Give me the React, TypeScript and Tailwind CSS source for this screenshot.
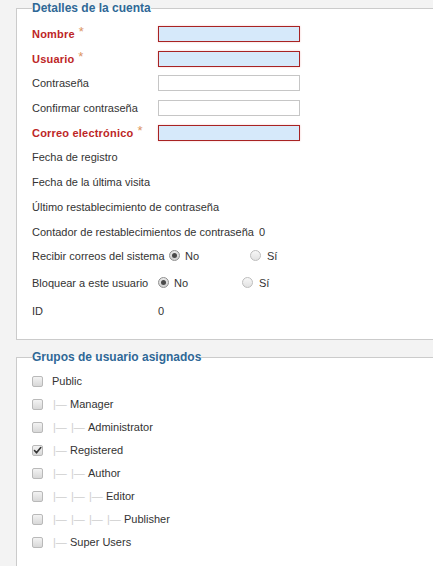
import React from 'react'

type TextRow = { label: string; required?: boolean; input?: boolean }

const TEXT_ROWS: TextRow[] = [
  { label: 'Nombre', required: true, input: true },
  { label: 'Usuario', required: true, input: true },
  { label: 'Contraseña', input: true },
  { label: 'Confirmar contraseña', input: true },
  { label: 'Correo electrónico', required: true, input: true },
  { label: 'Fecha de registro' },
  { label: 'Fecha de la última visita' },
  { label: 'Último restablecimiento de contraseña' },
]

const GROUPS = [
  { name: 'Public', depth: 0 },
  { name: 'Manager', depth: 1 },
  { name: 'Administrator', depth: 2 },
  { name: 'Registered', depth: 1, checked: true },
  { name: 'Author', depth: 2 },
  { name: 'Editor', depth: 3 },
  { name: 'Publisher', depth: 4 },
  { name: 'Super Users', depth: 1 },
]

function Radio({ checked }: { checked?: boolean }) {
  return (
    <span
      className={`inline-flex h-[11px] w-[11px] shrink-0 items-center justify-center rounded-full border bg-linear-to-b ${
        checked ? 'border-[#8f8f8f] from-[#e9e9e9] to-[#cfcfcf]' : 'border-[#bdbdbd] from-[#f7f7f7] to-[#e2e2e2]'
      }`}
    >
      {checked && <span className="h-[5px] w-[5px] rounded-full bg-[#4a4a4a]" />}
    </span>
  )
}

function Checkbox({ checked }: { checked?: boolean }) {
  return (
    <span className="inline-flex h-[11px] w-[11px] shrink-0 items-center justify-center rounded-[2px] border border-[#b9b9b9] bg-linear-to-b from-[#f3f3f3] to-[#d8d8d8]">
      {checked && (
        <svg width="9" height="9" viewBox="0 0 9 9" fill="none">
          <path d="M1.5 4.5L3.5 6.8L7.8 1.5" stroke="#333" strokeWidth="1.6" strokeLinecap="round" strokeLinejoin="round" />
        </svg>
      )}
    </span>
  )
}

export default function App() {
  return (
    <div className="h-[566px] overflow-hidden bg-[#f3f3f3] pl-4 font-['Liberation_Sans',Arial,sans-serif] text-[11px] text-[#333]">
      {/* ── Detalles de la cuenta ───────────────────────────── */}
      <fieldset className="border border-r-0 border-[#cbcbcb] bg-white pb-[16px] pl-[15px]">
        <legend className="text-[12px] font-bold leading-[16px] text-[#2f6896]">Detalles de la cuenta</legend>
        <div className="pt-[5.4px]">
          {TEXT_ROWS.map(r => (
            <div key={r.label} className="flex h-[24.75px] items-center">
              <span className="w-[126px] shrink-0 whitespace-nowrap">
                {r.required ? (
                  <>
                    <span className="font-bold tracking-[0.2px] text-[#bd2626]">{r.label}</span>
                    <span className="ml-[4px] align-[2px] text-[13px] leading-none text-[#dc9462]">*</span>
                  </>
                ) : (
                  r.label
                )}
              </span>
              {r.input && (
                <span
                  className={`block h-[16px] w-[142px] border ${
                    r.required
                      ? 'border-[#a82323] bg-[#d6e9fa] shadow-[0_0_2px_#f4caca]'
                      : 'border-[#c6c6c6] bg-white'
                  }`}
                />
              )}
            </div>
          ))}

          <div className="flex h-[24.75px] items-center whitespace-nowrap">
            Contador de restablecimientos de contraseña
            <span className="ml-[5px]">0</span>
          </div>

          <div className="flex h-[23.25px] items-center whitespace-nowrap">
            <span className="w-[137px] shrink-0">Recibir correos del sistema</span>
            <Radio checked />
            <span className="ml-[5px] w-[65px]">No</span>
            <Radio />
            <span className="ml-[6px]">Sí</span>
          </div>

          <div className="flex h-[30.75px] items-center whitespace-nowrap">
            <span className="w-[126px] shrink-0">Bloquear a este usuario</span>
            <Radio checked />
            <span className="ml-[5px] w-[68px]">No</span>
            <Radio />
            <span className="ml-[6px]">Sí</span>
          </div>

          <div className="flex h-[25.25px] items-center">
            <span className="w-[126px] shrink-0">ID</span>
            <span>0</span>
          </div>
        </div>
      </fieldset>

      {/* ── Grupos de usuario asignados ─────────────────────── */}
      <fieldset className="mt-[9px] border border-r-0 border-b-0 border-[#cbcbcb] bg-white pb-[40px] pl-[15px]">
        <legend className="text-[12px] font-bold leading-[16px] text-[#2f6896]">Grupos de usuario asignados</legend>
        <div className="pt-[4.5px]">
          {GROUPS.map(g => (
            <div key={g.name} className="flex h-[23px] items-center whitespace-nowrap">
              <Checkbox checked={g.checked} />
              <span className="ml-[9px] flex items-center">
                {Array.from({ length: g.depth }).map((_, i) => (
                  <span key={i} className="w-[18px] pl-px text-[#cfcfcf]">|—</span>
                ))}
                <span>{g.name}</span>
              </span>
            </div>
          ))}
        </div>
      </fieldset>
    </div>
  )
}
